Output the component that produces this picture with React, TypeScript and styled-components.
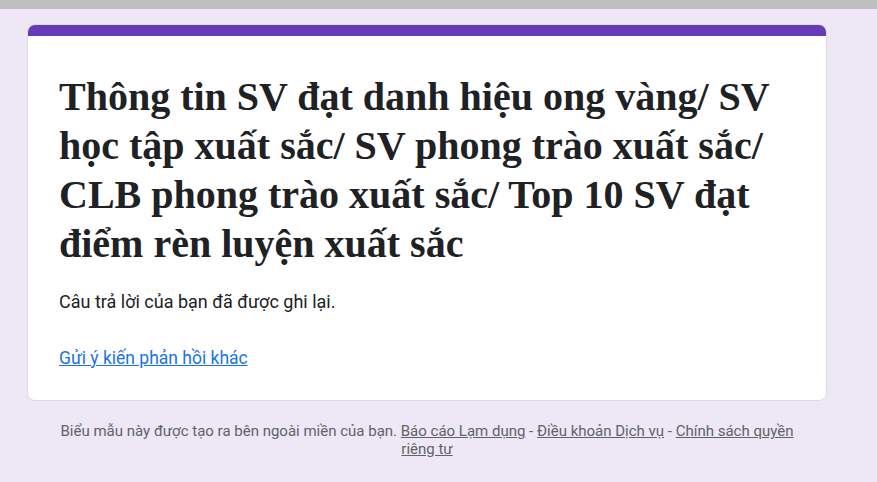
import React from "react";
import styled, { createGlobalStyle } from "styled-components";

const Global = createGlobalStyle`
  html, body { margin: 0; padding: 0; }
  body { background: #ede7f6; font-family: Roboto, "Noto Sans", sans-serif; }
`;

const TopBar = styled.div`
  height: 9px;
  background: #bfbfbf;
`;

const Page = styled.main`
  width: 800px;
  margin-left: 27px;
  padding-top: 15px;
`;

const Card = styled.section`
  background: #fff;
  border: 1px solid #dadce0;
  border-radius: 8px;
  overflow: hidden;
  box-sizing: border-box;
`;

const Accent = styled.div`
  height: 11px;
  margin: -1px -1px 0;
  background: #673ab7;
  border-top: 1px solid #673ab7;
`;

const CardBody = styled.div`
  padding: 36px 24px 30px 31px;
`;

const Title = styled.h1`
  margin: 0;
  font-family: "Liberation Serif", "Times New Roman", serif;
  font-weight: 700;
  font-size: 40px;
  line-height: 49px;
  color: #202124;
`;

const Message = styled.p`
  margin: 22px 0 0;
  font-size: 18px;
  line-height: 24px;
  color: #202124;
`;

const Link = styled.a`
  display: inline-block;
  margin-top: 32px;
  font-size: 17.5px;
  line-height: 24px;
  color: #1a73e8;
  text-decoration: underline;
`;

const Footer = styled.footer`
  margin-top: 21px;
  padding: 0 30px;
  text-align: center;
  font-size: 15px;
  line-height: 18px;
  color: #5f6368;
`;

const FooterLink = styled.a`
  color: #5f6368;
  text-decoration: underline;
`;

export default function App() {
  return (
    <>
      <Global />
      <TopBar />
      <Page>
        <Card>
          <Accent />
          <CardBody>
            <Title>
              Thông tin SV đạt danh hiệu ong vàng/ SV học tập xuất sắc/ SV phong trào xuất sắc/ CLB phong
              trào xuất sắc/ Top 10 SV đạt điểm rèn luyện xuất sắc
            </Title>
            <Message>Câu trả lời của bạn đã được ghi lại.</Message>
            <div>
              <Link href="#">Gửi ý kiến phản hồi khác</Link>
            </div>
          </CardBody>
        </Card>
        <Footer>
          Biểu mẫu này được tạo ra bên ngoài miền của bạn. <FooterLink href="#">Báo cáo Lạm dụng</FooterLink> -{" "}
          <FooterLink href="#">Điều khoản Dịch vụ</FooterLink> -{" "}
          <FooterLink href="#">Chính sách quyền riêng tư</FooterLink>
        </Footer>
      </Page>
    </>
  );
}
